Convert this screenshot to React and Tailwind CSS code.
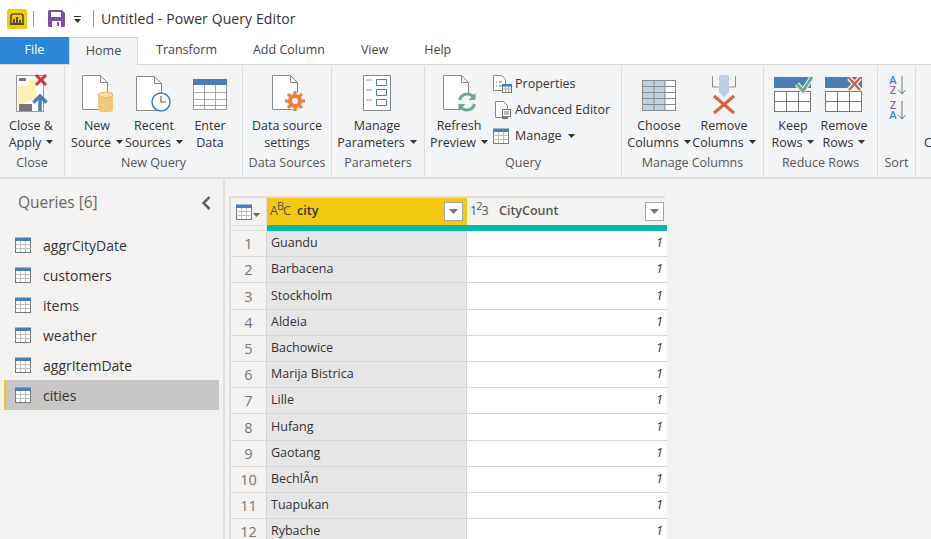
import { Fragment } from 'react';

const tabs = ['Transform', 'Add Column', 'View', 'Help'];
const queries = ['aggrCityDate', 'customers', 'items', 'weather', 'aggrItemDate', 'cities'];
const cities = ['Guandu', 'Barbacena', 'Stockholm', 'Aldeia', 'Bachowice', 'Marija Bistrica', 'Lille', 'Hufang', 'Gaotang', 'BechlÃ­n', 'Tuapukan', 'Rybache'];

const Caret = ({ className = 'ml-[5px]' }) => (
  <svg width="7" height="4" viewBox="0 0 7 4" className={`inline-block align-[3px] ${className}`}>
    <path d="M0 0h7L3.5 4z" fill="#333" />
  </svg>
);

// small table glyph with a blue header, used for queries and the Manage button
const TableIcon = ({ size = 16 }) => (
  <svg width={size} height={size} viewBox="0 0 16 16" className="shrink-0">
    <rect x="0.5" y="3" width="15" height="12.5" fill="#fff" stroke="#777" />
    <path d="M0.5 7.5h15M0.5 11.5h15M5.5 4v11M10.5 4v11" stroke="#bdbdbd" />
    <rect x="0" y="0.5" width="16" height="3.5" fill="#4a7fb5" />
  </svg>
);

const Doc = () => (
  <path d="M1.5 1.5h18l7 7v27h-25z M19.5 1.5v7h7" fill="#fff" stroke="#8a8a8a" />
);

const CloseApplyIcon = () => (
  <svg width="44" height="44" viewBox="0 0 44 44">
    <rect x="7.5" y="4.5" width="27" height="36" fill="#fff" stroke="#999" />
    <path d="M9 15h10v-6h8v18l-12 6H9z" fill="#fdf0b5" />
    <rect x="10" y="7" width="7" height="3" fill="#777" />
    <rect x="10" y="33" width="13" height="7" fill="#777" />
    <path d="M27 4l10 10M37 4L27 14" stroke="#d13438" strokeWidth="3" />
    <path d="M31 40V26M24.500 31.500L31 25l6.500 6.500" fill="none" stroke="#4a7fb5" strokeWidth="3.500" />
  </svg>
);

const NewSourceIcon = () => (
  <svg width="44" height="44" viewBox="0 0 44 44">
    <g transform="translate(6 3)"><Doc /></g>
    <path d="M23 24c0-4 15-4 15-1v16c0 3-15 3-15 0z" fill="#f0c77e" />
    <ellipse cx="30.500" cy="24" rx="7.500" ry="2.500" fill="#f7dfae" stroke="#e9b95f" />
  </svg>
);

const RecentIcon = () => (
  <svg width="44" height="44" viewBox="0 0 44 44">
    <g transform="translate(3 4)"><Doc /></g>
    <circle cx="29" cy="31" r="9" fill="#fff" stroke="#4a7fb5" strokeWidth="1.500" />
    <path d="M29 25v6h5" fill="none" stroke="#666" strokeWidth="1.200" />
  </svg>
);

const EnterDataIcon = () => (
  <svg width="44" height="44" viewBox="0 0 44 44">
    <rect x="5.500" y="8.500" width="33" height="30" fill="#fff" stroke="#9a9a9a" />
    <path d="M5 21.500h33M5 28.500h33M5 34.500h33M16.500 13v25M27.500 13v25" stroke="#a6a6a6" />
    <rect x="5" y="8" width="34" height="6" fill="#4a7fb5" />
  </svg>
);

const SettingsIcon = () => (
  <svg width="44" height="44" viewBox="0 0 44 44">
    <g transform="translate(6 3)"><Doc /></g>
    <circle cx="30" cy="30" r="9" fill="#f3f4f6" />
    <circle cx="30" cy="30" r="5" fill="none" stroke="#e8823a" strokeWidth="4" />
    <path d="M30 20v4M30 36v4M20 30h4M36 30h4M23 23l3 3M34 34l3 3M37 23l-3 3M26 34l-3 3" stroke="#e8823a" strokeWidth="3" />
  </svg>
);

const ParamsIcon = () => (
  <svg width="44" height="44" viewBox="0 0 44 44">
    <rect x="8.500" y="4.500" width="27" height="35" fill="#fff" stroke="#888" />
    <path d="M11 9h6M11 19h6M11 29h6" stroke="#999" />
    <path d="M21.500 8.500h10v6h-10zM21.500 18.500h10v6h-10zM21.500 28.500h10v6h-10z" fill="#fff" stroke="#4a7fb5" />
  </svg>
);

const RefreshIcon = () => (
  <svg width="44" height="44" viewBox="0 0 44 44">
    <g transform="translate(5 3)"><Doc /></g>
    <circle cx="30" cy="31" r="9" fill="#f3f4f6" />
    <path d="M22.500 29a8 8 0 0 1 13-4l2 2M37.500 33a8 8 0 0 1-13 4l-2-2" fill="none" stroke="#6fa88f" strokeWidth="3" />
    <path d="M38.500 22v7h-7zM21.500 40v-7h7z" fill="#6fa88f" />
  </svg>
);

const PropertiesIcon = () => (
  <svg width="20" height="20" viewBox="0 0 20 20">
    <path d="M0.500 1.500h8l4 4v11h-12z" fill="#fff" stroke="#888" />
    <path d="M3 8h1M3 12h1M6 8h3M6 12h3" stroke="#777" />
    <rect x="9.500" y="11.500" width="9" height="7" fill="#fff" stroke="#777" />
    <path d="M9.500 15h9M12.500 12v6M15.500 12v6" stroke="#aaa" />
    <rect x="9" y="10" width="10" height="2.500" fill="#4a7fb5" />
  </svg>
);

const AdvancedIcon = () => (
  <svg width="20" height="20" viewBox="0 0 20 20">
    <path d="M2.500 1.500h8l4 4v12h-12z" fill="#fff" stroke="#888" />
    <rect x="9.500" y="9.500" width="8" height="7" fill="#fff" stroke="#777" />
    <path d="M11 12h5M11 14h5" stroke="#777" />
    <rect x="9" y="16" width="6" height="3" fill="#777" />
  </svg>
);

const ChooseColsIcon = () => (
  <svg width="44" height="44" viewBox="0 0 44 44">
    <rect x="5.500" y="9.500" width="33" height="30" fill="#fff" stroke="#8a8a8a" />
    <rect x="6" y="10" width="22" height="29" fill="#bcd0e6" />
    <path d="M6 15.500h32M6 21.500h32M6 27.500h32M6 33.500h32M17 10v29M28 10v29" stroke="#8a8a8a" />
  </svg>
);

const RemoveColsIcon = () => (
  <svg width="44" height="44" viewBox="0 0 44 44">
    <path d="M10.500 5v11h6M33.500 5v11h-6" fill="none" stroke="#8a8a8a" />
    <path d="M17 4h10v17l-5 6-5-6z" fill="#bcd0e6" />
    <path d="M12 25l20 17M32 25L12 42" stroke="#d9603b" strokeWidth="3" />
  </svg>
);

const KeepRowsIcon = () => (
  <svg width="44" height="44" viewBox="0 0 44 44">
    <rect x="3" y="6" width="37" height="11" fill="#4a7fb5" />
    <rect x="3.500" y="20.500" width="36" height="20" fill="#fff" stroke="#777" />
    <path d="M3 30.500h36M15.500 20v20M27.500 20v20" stroke="#777" />
    <path d="M26 13l6 7L41 6" fill="none" stroke="#f3f4f6" strokeWidth="5" />
    <path d="M26 13l6 7L41 6" fill="none" stroke="#6fa88f" strokeWidth="3" />
  </svg>
);

const RemoveRowsIcon = () => (
  <svg width="44" height="44" viewBox="0 0 44 44">
    <rect x="3" y="6" width="37" height="11" fill="#4a7fb5" />
    <rect x="3.500" y="20.500" width="36" height="20" fill="#fff" stroke="#777" />
    <path d="M3 30.500h36M15.500 20v20M27.500 20v20" stroke="#777" />
    <path d="M27 7l11 12M38 7L27 19" stroke="#f3f4f6" strokeWidth="5" />
    <path d="M27 7l11 12M38 7L27 19" stroke="#d9603b" strokeWidth="2.500" />
  </svg>
);

const SortIcon = ({ top, bottom, topColor, bottomColor }) => (
  <div className="flex h-[23px] items-center">
    <div className="flex w-[10px] flex-col items-center text-[11px] leading-[10px] font-semibold">
      <span className={topColor}>{top}</span>
      <span className={bottomColor}>{bottom}</span>
    </div>
    <svg width="8" height="20" viewBox="0 0 8 20">
      <path d="M4 1v18M0.500 15L4 19l3.500-4" fill="none" stroke="#777" />
    </svg>
  </div>
);

const BigButton = ({ width, icon, line1, line2, caret }) => (
  <div className={`flex shrink-0 flex-col items-center ${width}`}>
    <div className="flex h-[44px] items-center justify-center">{icon}</div>
    <div className="mt-[2px] whitespace-nowrap text-center leading-[17px]">
      <div>{line1}</div>
      <div>
        {line2}
        {caret && <Caret />}
      </div>
    </div>
  </div>
);

const Group = ({ width, label, className = '', children }) => (
  <div className={`flex shrink-0 flex-col border-r border-[#dcdcdc] ${width}`}>
    <div className={`flex h-[88px] pt-[5px] ${className}`}>{children}</div>
    <div className="whitespace-nowrap text-center text-[#555] leading-[17px]">{label}</div>
  </div>
);

const SmallButton = ({ icon, label, caret }) => (
  <div className="flex h-[26px] items-center whitespace-nowrap">
    <div className="flex w-[22px] shrink-0 items-center">{icon}</div>
    {label}
    {caret && <Caret className="ml-[6px]" />}
  </div>
);

const ColumnMenu = () => (
  <div className="flex h-[19px] w-[19px] items-center justify-center border border-[#a6a6a6] bg-white">
    <svg width="9" height="5" viewBox="0 0 9 5"><path d="M0 0h9L4.500 5z" fill="#777" /></svg>
  </div>
);

export default function App() {
  return (
    <div className="h-[539px] w-[931px] overflow-hidden bg-[#f3f2f1] font-['Open_Sans',sans-serif] text-[12.5px] text-[#333]">
      {/* Title bar */}
      <div className="flex h-[37px] items-center bg-white pl-[7px]">
        <div className="flex h-[20px] w-[20px] items-center justify-center rounded-[2px] bg-[#f2c811]">
          <svg width="14" height="12" viewBox="0 0 14 12">
            <path d="M1 10V3a2 2 0 0 1 2-2h8a2 2 0 0 1 2 2v7" fill="none" stroke="#222" strokeWidth="1.200" />
            <path d="M0 11h14M4 10V6M7 10V4M10 10V7" stroke="#222" strokeWidth="1.500" />
          </svg>
        </div>
        <div className="ml-[6px] h-[16px] w-px bg-[#999]" />
        <svg width="17" height="17" viewBox="0 0 17 17" className="ml-[14px]">
          <path d="M0 1.500A1.500 1.500 0 0 1 1.500 0H14l3 3v12.500a1.500 1.500 0 0 1-1.500 1.500h-14A1.500 1.500 0 0 1 0 15.500z" fill="#7b4fa6" />
          <rect x="3" y="2" width="10" height="5" fill="#fff" />
          <rect x="4" y="11" width="9" height="6" fill="#fff" />
          <rect x="9" y="12" width="2" height="4" fill="#7b4fa6" />
        </svg>
        <svg width="9" height="8" viewBox="0 0 9 8" className="ml-[8px] mt-[3px]">
          <path d="M1 0.500h7" stroke="#333" />
          <path d="M1 3h7L4.500 7z" fill="#333" />
        </svg>
        <div className="ml-[11px] h-[17px] w-px bg-[#999]" />
        <div className="ml-[7px] text-[14px] tracking-[0.1px] text-[#333]">Untitled - Power Query Editor</div>
      </div>

      {/* Tabs */}
      <div className="flex h-[28px] items-stretch border-b border-[#d6d6d6] bg-white text-[#444]">
        <div className="flex w-[69px] items-center justify-center bg-[#2b88d8] text-white">File</div>
        <div className="-mb-px flex w-[69px] items-center justify-center border-x border-t border-[#d6d6d6] bg-[#f3f4f6]">Home</div>
        {tabs.map(tab => (
          <div key={tab} className="flex items-center px-[18px]">{tab}</div>
        ))}
      </div>

      {/* Ribbon */}
      <div className="flex h-[114px] overflow-hidden border-b-2 border-[#dedede] bg-[#f3f4f6] pt-[1px]">
        <Group width="w-[65px]" label="Close">
          <BigButton width="w-[62px]" icon={<CloseApplyIcon />} line1="Close &" line2="Apply" caret />
        </Group>
        <Group width="w-[178px]" label="New Query" className="pl-[6px]">
          <BigButton width="w-[52px]" icon={<NewSourceIcon />} line1="New" line2="Source" caret />
          <BigButton width="w-[62px]" icon={<RecentIcon />} line1="Recent" line2="Sources" caret />
          <BigButton width="w-[50px]" icon={<EnterDataIcon />} line1="Enter" line2="Data" />
        </Group>
        <Group width="w-[89px]" label="Data Sources">
          <BigButton width="w-[88px]" icon={<SettingsIcon />} line1="Data source" line2="settings" />
        </Group>
        <Group width="w-[93px]" label="Parameters">
          <BigButton width="w-[90px]" icon={<ParamsIcon />} line1="Manage" line2="Parameters" caret />
        </Group>
        <Group width="w-[197px]" label="Query">
          <BigButton width="w-[68px]" icon={<RefreshIcon />} line1="Refresh" line2="Preview" caret />
          <div className="flex flex-col">
            <SmallButton icon={<PropertiesIcon />} label="Properties" />
            <SmallButton icon={<AdvancedIcon />} label="Advanced Editor" />
            <SmallButton icon={<TableIcon />} label="Manage" caret />
          </div>
        </Group>
        <Group width="w-[142px]" label="Manage Columns" className="pl-[2px]">
          <BigButton width="w-[70px]" icon={<ChooseColsIcon />} line1="Choose" line2="Columns" caret />
          <BigButton width="w-[60px]" icon={<RemoveColsIcon />} line1="Remove" line2="Columns" caret />
        </Group>
        <Group width="w-[114px]" label="Reduce Rows" className="pl-[4px]">
          <BigButton width="w-[50px]" icon={<KeepRowsIcon />} line1="Keep" line2="Rows" caret />
          <BigButton width="w-[52px]" icon={<RemoveRowsIcon />} line1="Remove" line2="Rows" caret />
        </Group>
        <Group width="w-[38px]" label="Sort" className="pl-[10px]">
          <div className="flex flex-col gap-[2px] pt-[2px]">
            <SortIcon top="A" bottom="Z" topColor="text-[#4a7fb5]" bottomColor="text-[#8a5fb0]" />
            <SortIcon top="Z" bottom="A" topColor="text-[#8a5fb0]" bottomColor="text-[#4a7fb5]" />
          </div>
        </Group>
        <div className="flex shrink-0 flex-col pl-[8px] pt-[51px] leading-[17px]">
          <div className="h-[17px]" />
          <div>Combine</div>
        </div>
      </div>

      {/* Body */}
      <div className="flex h-[360px]">
        <div className="w-[225px] shrink-0 border-r-2 border-[#dedede] pl-[4px] pt-[11px]">
          <div className="flex h-[26px] items-center pl-[14px] pr-[12px]">
            <span className="text-[15.500px] text-[#666]">Queries [6]</span>
            <svg width="10" height="14" viewBox="0 0 10 14" className="ml-auto">
              <path d="M8.500 1L2.500 7l6 6" fill="none" stroke="#666" strokeWidth="2.500" />
            </svg>
          </div>
          <div className="mt-[14px] w-[215px] text-[14px]">
            {queries.map(query => (
              <div
                key={query}
                className={`flex h-[30px] items-center pl-[11px] ${query === 'cities' ? 'border-l-2 border-[#f2c811] bg-[#c8c6c4] !pl-[9px]' : ''}`}
              >
                <TableIcon />
                <span className="ml-[12px]">{query}</span>
              </div>
            ))}
          </div>
        </div>

        <div className="pl-[4px] pt-[17px]">
          <div className="grid w-[436px] grid-cols-[36px_200px_200px] border-t-2 border-l-2 border-[#dedede]">
            {/* Header row */}
            <div className="flex h-[27px] items-center border-r border-[#dedede] pl-[5px]">
              <TableIcon />
              <svg width="7" height="4" viewBox="0 0 7 4" className="ml-[1px] mt-[7px]"><path d="M0 0h7L3.500 4z" fill="#666" /></svg>
            </div>
            <div className="flex h-[27px] items-center bg-[#f2c811] pl-[3px] pr-[4px] font-semibold">
              <span className="w-[27px] font-normal tracking-[-1px] text-[#555]">A<sup className="text-[11px]">B</sup>C</span>
              <span>city</span>
              <div className="ml-auto"><ColumnMenu /></div>
            </div>
            <div className="flex h-[27px] items-center pl-[3px] pr-[3px] font-semibold text-[#555]">
              <span className="w-[27px] font-normal tracking-[-1px]">1<sup className="text-[11px]">2</sup>3</span>
              <span className="ml-[2px]">CityCount</span>
              <div className="ml-auto"><ColumnMenu /></div>
            </div>

            {/* Quality bar */}
            <div className="h-[6px] border-r border-[#dedede] border-y" />
            <div className="col-span-2 h-[6px] bg-[#01b8aa]" />

            {cities.map((city, i) => (
              <Fragment key={city}>
                <div className="flex h-[26.200px] items-center justify-center border-r border-b border-[#d6d6d6] pt-[1px] text-[14.500px] text-[#777]">{i + 1}</div>
                <div className="flex h-[26.200px] items-center border-r border-b border-[#d6d6d6] bg-[#e6e6e6] pl-[4px]">{city}</div>
                <div className="flex h-[26.200px] items-center justify-end border-b border-[#d6d6d6] bg-white pr-[4px] italic">1</div>
              </Fragment>
            ))}
          </div>
        </div>
      </div>
    </div>
  );
}
